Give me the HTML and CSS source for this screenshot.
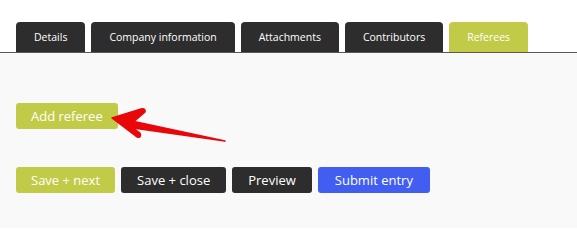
FILE: index.html
```html
<!DOCTYPE html>
<html>
<head>
<meta charset="utf-8">
<link rel="stylesheet" href="styles.css">
</head>
<body>
<div class="tabs">
  <div class="tab">Details</div>
  <div class="tab">Company information</div>
  <div class="tab">Attachments</div>
  <div class="tab">Contributors</div>
  <div class="tab active">Referees</div>
</div>
<div class="panel">
  <div class="add-row">
    <button class="btn green">Add referee</button>
  </div>
  <div class="actions">
    <button class="btn green">Save + next</button>
    <button class="btn dark">Save + close</button>
    <button class="btn dark">Preview</button>
    <button class="btn blue">Submit entry</button>
  </div>
  <svg class="arrow" width="130" height="40" viewBox="105 104 130 40" xmlns="http://www.w3.org/2000/svg">
    <path d="M112 118 L141 109 Q146 108 145 112 L134 121.5 L225 141 L133 128 L140 133 Q142 138 137 137 Z" fill="#e8070b" stroke="#e8070b" stroke-width="1.5" stroke-linejoin="round"/>
  </svg>
</div>
</body>
</html>
```
FILE: styles.css
```css
html, body {
  margin: 0;
  padding: 0;
  background: #ffffff;
  font-family: "Open Sans", "Liberation Sans", sans-serif;
}
.tabs {
  display: flex;
  gap: 6px;
  padding: 22px 0 0 16px;
  border-bottom: 1px solid #585858;
  background: #ffffff;
}
.tab {
  height: 30px;
  line-height: 30px;
  padding: 0 18px;
  background: #2d2d2d;
  color: #ffffff;
  font-size: 10.5px;
  font-weight: 500;
  border-radius: 4px 4px 0 0;
}
.tab.active {
  background: #c2cb47;
}
.panel {
  position: relative;
  background: #f9f9f9;
  height: 175px;
  padding: 50px 16px 0;
  box-sizing: border-box;
}
.add-row {
  display: flex;
}
.actions {
  display: flex;
  gap: 6px;
  margin-top: 38px;
}
.btn {
  height: 26px;
  padding: 0 15px;
  border: none;
  border-radius: 3px;
  color: #ffffff;
  font-family: "Open Sans", "Liberation Sans", sans-serif;
  font-size: 13px;
  font-weight: 500;
  line-height: 26px;
  cursor: pointer;
}
.green { background: #c2cb47; }
.dark { background: #2d2d2d; padding: 0 16px; }
.blue { background: #425ef0; padding: 0 17px; }
.arrow {
  position: absolute;
  left: 105px;
  top: 51px;
}
```
